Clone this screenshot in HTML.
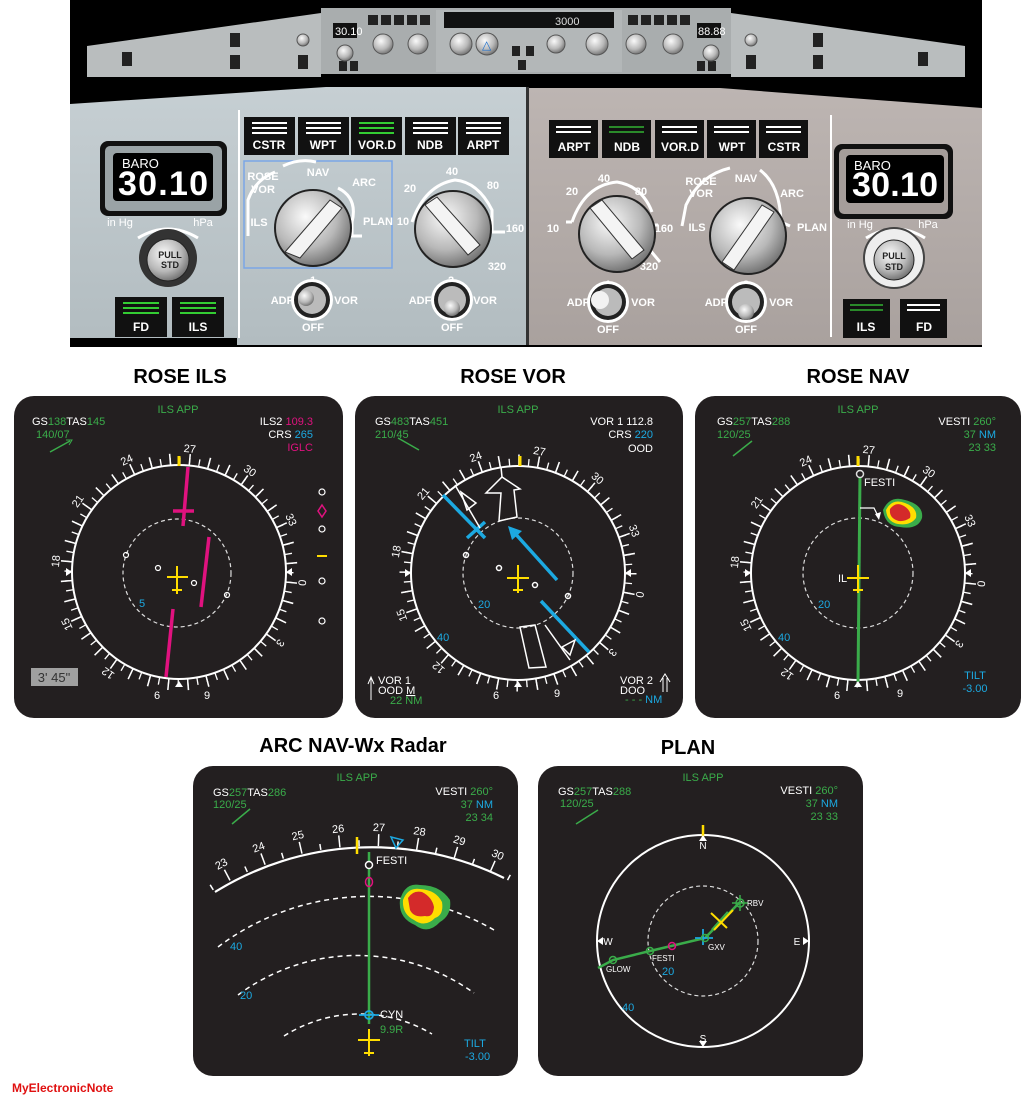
<!DOCTYPE html>
<html><head><meta charset="utf-8"><style>
html,body{margin:0;padding:0;background:#fff;}
svg{display:block}
text{font-family:"Liberation Sans",sans-serif;}
.t{font-size:11px;fill:#fff}
.g{fill:#3aac4a}.m{fill:#e0127f}.c{fill:#1ca9e1}.w{fill:#fff}
.lbl{font-size:11px;fill:#fff;text-anchor:middle}
.pl{font-size:11px;fill:#fff;font-weight:bold;text-anchor:middle}
.btn{font-size:12px;fill:#fff;font-weight:bold;text-anchor:middle}
</style></head><body>
<svg width="1036" height="1102" viewBox="0 0 1036 1102" xmlns="http://www.w3.org/2000/svg">
<defs>
<radialGradient id="kn" cx="40%" cy="35%" r="70%"><stop offset="0" stop-color="#fafafa"/><stop offset="0.6" stop-color="#b8b8b8"/><stop offset="1" stop-color="#6a6a6a"/></radialGradient>
<linearGradient id="lp" x1="0" y1="0" x2="0" y2="1"><stop offset="0" stop-color="#c6cfd3"/><stop offset="1" stop-color="#b2bcc0"/></linearGradient>
<linearGradient id="rp" x1="0" y1="0" x2="0" y2="1"><stop offset="0" stop-color="#bdb5b2"/><stop offset="1" stop-color="#a9a19e"/></linearGradient>
<clipPath id="arcclip"><rect x="195" y="768" width="321" height="306" rx="18"/></clipPath>
</defs>
<rect width="1036" height="1102" fill="#fff"/>

<!-- ===== TOP PANEL ===== -->
<rect x="70" y="0" width="912" height="347" fill="#000"/>
<polygon points="87,46 321,13 321,77 87,77" fill="#b9bdbe"/>
<polygon points="731,13 965,46 965,77 731,77" fill="#b9bdbe"/>
<rect x="321" y="8" width="410" height="66" fill="#a9adae"/>
<rect x="436" y="10" width="186" height="62" fill="#b3b7b8"/>
<rect x="444" y="12" width="170" height="16" fill="#111"/>
<text x="555" y="25" font-size="11" fill="#ddd">3000</text>
<rect x="333" y="23" width="24" height="15" fill="#111"/><text x="335" y="35" font-size="11" fill="#fff">30.10</text>
<rect x="697" y="23" width="24" height="15" fill="#111"/><text x="698" y="35" font-size="11" fill="#fff">88.88</text>
<g fill="#222"><rect x="368" y="15" width="10" height="10"/><rect x="381" y="15" width="10" height="10"/><rect x="394" y="15" width="10" height="10"/><rect x="407" y="15" width="10" height="10"/><rect x="420" y="15" width="10" height="10"/>
<rect x="628" y="15" width="10" height="10"/><rect x="641" y="15" width="10" height="10"/><rect x="654" y="15" width="10" height="10"/><rect x="667" y="15" width="10" height="10"/><rect x="680" y="15" width="10" height="10"/>
<rect x="122" y="52" width="10" height="14"/><rect x="230" y="33" width="10" height="14"/><rect x="230" y="55" width="10" height="14"/><rect x="298" y="55" width="10" height="14"/>
<rect x="813" y="33" width="10" height="14"/><rect x="813" y="55" width="10" height="14"/><rect x="918" y="52" width="10" height="14"/><rect x="746" y="55" width="10" height="14"/>
<rect x="339" y="61" width="8" height="10"/><rect x="350" y="61" width="8" height="10"/><rect x="697" y="61" width="8" height="10"/><rect x="708" y="61" width="8" height="10"/>
<rect x="512" y="46" width="8" height="10"/><rect x="526" y="46" width="8" height="10"/><rect x="518" y="60" width="8" height="10"/></g>
<g fill="url(#kn)" stroke="#555"><circle cx="345" cy="53" r="8"/><circle cx="383" cy="44" r="10"/><circle cx="418" cy="44" r="10"/><circle cx="461" cy="44" r="11"/><circle cx="487" cy="44" r="11"/><circle cx="556" cy="44" r="9"/><circle cx="597" cy="44" r="11"/><circle cx="636" cy="44" r="10"/><circle cx="673" cy="44" r="10"/><circle cx="711" cy="53" r="8"/><circle cx="303" cy="40" r="6"/><circle cx="751" cy="40" r="6"/></g>
<text x="482" y="49" font-size="12" fill="#1a6fd0">△</text>

<!-- lower panels -->
<polygon points="70,104 326,87 527,87 527,345 237,345 237,338 70,338" fill="url(#lp)"/>
<polygon points="528,88 720,88 982,108 982,345 528,345" fill="url(#rp)"/>
<rect x="526" y="87" width="3" height="258" fill="#333"/>
<rect x="238" y="110" width="2" height="228" fill="#fff"/>
<rect x="830" y="115" width="2" height="222" fill="#fff"/>

<!-- buttons left -->
<g>
<rect x="244" y="117" width="51" height="38" fill="#111"/><rect x="252" y="122" width="35" height="2" fill="#fff"/><rect x="252" y="127" width="35" height="2" fill="#fff"/><rect x="252" y="132" width="35" height="2" fill="#fff"/><text x="269" y="149" class="btn">CSTR</text>
<rect x="298" y="117" width="51" height="38" fill="#111"/><rect x="306" y="122" width="35" height="2" fill="#fff"/><rect x="306" y="127" width="35" height="2" fill="#fff"/><rect x="306" y="132" width="35" height="2" fill="#fff"/><text x="323" y="149" class="btn">WPT</text>
<rect x="351" y="117" width="51" height="38" fill="#111"/><rect x="359" y="122" width="35" height="2" fill="#3c3"/><rect x="359" y="127" width="35" height="2" fill="#3c3"/><rect x="359" y="132" width="35" height="2" fill="#3c3"/><text x="377" y="149" class="btn">VOR.D</text>
<rect x="405" y="117" width="51" height="38" fill="#111"/><rect x="413" y="122" width="35" height="2" fill="#fff"/><rect x="413" y="127" width="35" height="2" fill="#fff"/><rect x="413" y="132" width="35" height="2" fill="#fff"/><text x="430" y="149" class="btn">NDB</text>
<rect x="458" y="117" width="51" height="38" fill="#111"/><rect x="466" y="122" width="35" height="2" fill="#fff"/><rect x="466" y="127" width="35" height="2" fill="#fff"/><rect x="466" y="132" width="35" height="2" fill="#fff"/><text x="483" y="149" class="btn">ARPT</text>
</g>
<!-- buttons right -->
<g>
<rect x="549" y="120" width="49" height="38" fill="#111"/><rect x="556" y="126" width="35" height="2" fill="#fff"/><rect x="556" y="131" width="35" height="2" fill="#fff"/><text x="574" y="151" class="btn">ARPT</text>
<rect x="602" y="120" width="49" height="38" fill="#111"/><rect x="609" y="126" width="35" height="2" fill="#2a8a2a"/><rect x="609" y="131" width="35" height="2" fill="#2a8a2a"/><text x="627" y="151" class="btn">NDB</text>
<rect x="655" y="120" width="49" height="38" fill="#111"/><rect x="662" y="126" width="35" height="2" fill="#fff"/><rect x="662" y="131" width="35" height="2" fill="#fff"/><text x="680" y="151" class="btn">VOR.D</text>
<rect x="707" y="120" width="49" height="38" fill="#111"/><rect x="714" y="126" width="35" height="2" fill="#fff"/><rect x="714" y="131" width="35" height="2" fill="#fff"/><text x="732" y="151" class="btn">WPT</text>
<rect x="759" y="120" width="49" height="38" fill="#111"/><rect x="766" y="126" width="35" height="2" fill="#fff"/><rect x="766" y="131" width="35" height="2" fill="#fff"/><text x="784" y="151" class="btn">CSTR</text>
</g>

<!-- BARO -->
<rect x="100" y="141" width="127" height="75" rx="8" fill="#111"/><rect x="105" y="146" width="117" height="65" rx="5" fill="#9aa3a6"/><rect x="113" y="153" width="100" height="48" rx="4" fill="#000"/>
<text x="122" y="168" font-size="13" fill="#fff">BARO</text><text x="163" y="195" font-size="34" font-weight="bold" fill="#fff" text-anchor="middle" textLength="90">30.10</text>
<rect x="834" y="144" width="119" height="75" rx="8" fill="#111"/><rect x="839" y="149" width="109" height="65" rx="5" fill="#a59d9a"/><rect x="846" y="155" width="98" height="48" rx="4" fill="#000"/>
<text x="854" y="170" font-size="13" fill="#fff">BARO</text><text x="895" y="196" font-size="34" font-weight="bold" fill="#fff" text-anchor="middle" textLength="86">30.10</text>
<text x="120" y="226" class="lbl">in Hg</text><text x="203" y="226" class="lbl">hPa</text>
<text x="860" y="228" class="lbl">in Hg</text><text x="928" y="228" class="lbl">hPa</text>
<path d="M138,238 Q168,220 198,238" stroke="#fff" stroke-width="3" fill="none"/>
<path d="M866,238 Q896,220 925,238" stroke="#fff" stroke-width="3" fill="none"/>
<circle cx="168" cy="258" r="29" fill="#333"/><circle cx="168" cy="260" r="21" fill="url(#kn)" stroke="#222"/>
<text x="170" y="258" font-size="9" font-weight="bold" text-anchor="middle" fill="#222">PULL</text><text x="170" y="268" font-size="9" font-weight="bold" text-anchor="middle" fill="#222">STD</text>
<circle cx="894" cy="258" r="30" fill="#eee" stroke="#444" stroke-width="2"/><circle cx="894" cy="260" r="20" fill="url(#kn)" stroke="#222"/>
<text x="894" y="259" font-size="9" font-weight="bold" text-anchor="middle" fill="#222">PULL</text><text x="894" y="270" font-size="9" font-weight="bold" text-anchor="middle" fill="#222">STD</text>

<!-- FD / ILS -->
<rect x="115" y="297" width="52" height="40" fill="#111"/><rect x="123" y="302" width="36" height="2" fill="#3c3"/><rect x="123" y="307" width="36" height="2" fill="#3c3"/><rect x="123" y="312" width="36" height="2" fill="#3c3"/><text x="141" y="331" class="btn">FD</text>
<rect x="172" y="297" width="52" height="40" fill="#111"/><rect x="180" y="302" width="36" height="2" fill="#3c3"/><rect x="180" y="307" width="36" height="2" fill="#3c3"/><rect x="180" y="312" width="36" height="2" fill="#3c3"/><text x="198" y="331" class="btn">ILS</text>
<rect x="843" y="299" width="47" height="39" fill="#111"/><rect x="850" y="304" width="33" height="2" fill="#2a8a2a"/><rect x="850" y="309" width="33" height="2" fill="#2a8a2a"/><text x="866" y="331" class="btn">ILS</text>
<rect x="900" y="299" width="47" height="39" fill="#111"/><rect x="907" y="304" width="33" height="2" fill="#fff"/><rect x="907" y="309" width="33" height="2" fill="#fff"/><text x="924" y="331" class="btn">FD</text>

<!-- mode/range knobs -->
<rect x="244" y="161" width="148" height="107" fill="none" stroke="#7aa6e6" stroke-width="1.5"/>
<path d="M248,236 L248,200 Q255,180 275,172 M283,166 Q300,158 316,162 M338,188 Q358,198 352,222 L352,236 L362,236" stroke="#fff" stroke-width="3" fill="none"/>
<text x="263" y="180" class="pl">ROSE</text><text x="263" y="193" class="pl">VOR</text><text x="318" y="176" class="pl">NAV</text><text x="364" y="186" class="pl">ARC</text><text x="378" y="225" class="pl">PLAN</text><text x="259" y="226" class="pl">ILS</text>
<circle cx="313" cy="228" r="38" fill="url(#kn)" stroke="#222" stroke-width="2"/><path d="M285,252 L330,200 L342,208 L300,258 Z" fill="#f4f4f4" stroke="#333"/>
<path d="M412,222 Q425,185 455,180 Q478,182 492,210 L492,232 M492,232 L505,232" stroke="#fff" stroke-width="3" fill="none"/>
<text x="410" y="192" class="pl">20</text><text x="452" y="175" class="pl">40</text><text x="493" y="189" class="pl">80</text><text x="403" y="225" class="pl">10</text><text x="515" y="232" class="pl">160</text><text x="497" y="270" class="pl">320</text>
<circle cx="453" cy="229" r="38" fill="url(#kn)" stroke="#222" stroke-width="2"/><path d="M425,205 L437,197 L480,245 L468,255 Z" fill="#f4f4f4" stroke="#333"/>

<path d="M572,222 Q585,185 617,182 Q642,186 652,212 M566,222 L572,222 M652,225 L658,225 M650,250 L660,262" stroke="#fff" stroke-width="3" fill="none"/>
<text x="572" y="195" class="pl">20</text><text x="604" y="182" class="pl">40</text><text x="641" y="195" class="pl">80</text><text x="553" y="232" class="pl">10</text><text x="664" y="232" class="pl">160</text><text x="649" y="270" class="pl">320</text>
<circle cx="617" cy="234" r="38" fill="url(#kn)" stroke="#222" stroke-width="2"/><path d="M590,208 L602,200 L644,250 L632,259 Z" fill="#f4f4f4" stroke="#333"/>
<path d="M682,226 L686,205 Q700,175 730,168 M760,170 Q780,185 781,222 L790,226" stroke="#fff" stroke-width="3" fill="none"/>
<text x="701" y="185" class="pl">ROSE</text><text x="701" y="197" class="pl">VOR</text><text x="746" y="182" class="pl">NAV</text><text x="792" y="197" class="pl">ARC</text><text x="812" y="231" class="pl">PLAN</text><text x="697" y="231" class="pl">ILS</text>
<circle cx="748" cy="236" r="38" fill="url(#kn)" stroke="#222" stroke-width="2"/><path d="M722,262 L762,205 L774,212 L734,270 Z" fill="#f4f4f4" stroke="#333"/>

<!-- ADF/VOR switches -->
<g>
<text x="313" y="284" class="pl">1</text><text x="451" y="284" class="pl">2</text><text x="608" y="288" class="pl">1</text><text x="746" y="288" class="pl">2</text>
<text x="282" y="304" class="pl">ADF</text><text x="346" y="304" class="pl">VOR</text><text x="313" y="331" class="pl">OFF</text>
<text x="420" y="304" class="pl">ADF</text><text x="485" y="304" class="pl">VOR</text><text x="452" y="331" class="pl">OFF</text>
<text x="578" y="306" class="pl">ADF</text><text x="643" y="306" class="pl">VOR</text><text x="608" y="333" class="pl">OFF</text>
<text x="716" y="306" class="pl">ADF</text><text x="781" y="306" class="pl">VOR</text><text x="746" y="333" class="pl">OFF</text>
<circle cx="312" cy="300" r="21" fill="#fff"/><circle cx="312" cy="300" r="18" fill="#222"/><circle cx="312" cy="300" r="14" fill="#bbb"/><circle cx="306" cy="298" r="8" fill="url(#kn)"/>
<circle cx="452" cy="300" r="21" fill="#fff"/><circle cx="452" cy="300" r="18" fill="#222"/><circle cx="452" cy="300" r="14" fill="#bbb"/><circle cx="452" cy="308" r="8" fill="url(#kn)"/>
<circle cx="608" cy="302" r="21" fill="#fff"/><circle cx="608" cy="302" r="18" fill="#222"/><circle cx="608" cy="302" r="14" fill="#bbb"/><circle cx="600" cy="300" r="9" fill="#f2f2f2"/>
<circle cx="746" cy="302" r="21" fill="#fff"/><circle cx="746" cy="302" r="18" fill="#222"/><circle cx="746" cy="302" r="14" fill="#bbb"/><circle cx="746" cy="312" r="8" fill="url(#kn)"/>
</g>

<!-- ===== TITLES ===== -->
<g font-weight="bold" font-size="20" text-anchor="middle" fill="#000">
<text x="180" y="383">ROSE ILS</text><text x="513" y="383">ROSE VOR</text><text x="858" y="383">ROSE NAV</text>
<text x="353" y="752">ARC NAV-Wx Radar</text><text x="688" y="754">PLAN</text></g>
<text x="12" y="1092" font-size="12" font-weight="bold" fill="#e01010">MyElectronicNote</text>

<!-- ===== ROSE ILS ===== -->
<rect x="14" y="396" width="329" height="322" rx="20" fill="#231f20"/>
<text x="178" y="413" class="t g" text-anchor="middle">ILS APP</text>
<text x="32" y="425" class="t"><tspan class="w">GS</tspan><tspan class="g">138</tspan><tspan class="w">TAS</tspan><tspan class="g">145</tspan></text>
<text x="36" y="438" class="t g">140/07</text>
<line x1="50" y1="452" x2="70" y2="441" stroke="#3aac4a" stroke-width="1.5"/><path d="M66,440 L72,440 L69,445" fill="none" stroke="#3aac4a"/>
<text x="313" y="425" class="t" text-anchor="end">ILS2 <tspan class="m">109.3</tspan></text>
<text x="313" y="438" class="t" text-anchor="end">CRS <tspan class="c">265</tspan></text>
<text x="313" y="451" class="t m" text-anchor="end">IGLC</text>
<circle cx="179" cy="572" r="107" fill="none" stroke="#fff" stroke-width="2"/>
<circle cx="179" cy="572" r="111" fill="none" stroke="#fff" stroke-width="7" stroke-dasharray="1.3 8.39"/>
<circle cx="179" cy="572" r="113" fill="none" stroke="#fff" stroke-width="11" stroke-dasharray="1.5 18.22" stroke-dashoffset="-9.86"/>
<g class="lbl" font-size="11">
<text x="179" y="452" transform="rotate(-25 179 572)" fill="#fff" text-anchor="middle">24</text>
<text x="179" y="452" transform="rotate(5 179 572)" fill="#fff" text-anchor="middle">27</text>
<text x="179" y="452" transform="rotate(35 179 572)" fill="#fff" text-anchor="middle">30</text>
<text x="179" y="452" transform="rotate(65 179 572)" fill="#fff" text-anchor="middle">33</text>
<text x="179" y="452" transform="rotate(95 179 572)" fill="#fff" text-anchor="middle">0</text>
<text x="179" y="452" transform="rotate(125 179 572)" fill="#fff" text-anchor="middle">3</text>
<text x="179" y="699" fill="#fff" text-anchor="middle" transform="translate(-22 0)">6</text>
<text x="179" y="699" fill="#fff" text-anchor="middle" transform="translate(28 0)">9</text>
<text x="179" y="452" transform="rotate(215 179 572)" fill="#fff" text-anchor="middle">12</text>
<text x="179" y="452" transform="rotate(245 179 572)" fill="#fff" text-anchor="middle">15</text>
<text x="179" y="452" transform="rotate(275 179 572)" fill="#fff" text-anchor="middle">18</text>
<text x="179" y="452" transform="rotate(305 179 572)" fill="#fff" text-anchor="middle">21</text>
</g>
<line x1="179" y1="456" x2="179" y2="466" stroke="#ffdd00" stroke-width="3"/>
<circle cx="177" cy="573" r="54" fill="none" stroke="#ddd" stroke-width="1.2" stroke-dasharray="4 3"/>
<g stroke="#e0127f" stroke-width="3.5"><line x1="188" y1="467" x2="183" y2="526"/><line x1="173" y1="511" x2="194" y2="511"/><line x1="209" y1="537" x2="201" y2="607"/><line x1="173" y1="609" x2="166" y2="677"/></g>
<g stroke="#ffdd00" stroke-width="2"><line x1="167" y1="577" x2="188" y2="577"/><line x1="177" y1="566" x2="177" y2="594"/><line x1="172" y1="590" x2="182" y2="590"/></g>
<g fill="none" stroke="#fff" stroke-width="1.2"><circle cx="158" cy="568" r="2.5"/><circle cx="194" cy="583" r="2.5"/><circle cx="126" cy="555" r="2.5"/><circle cx="227" cy="595" r="2.5"/>
<circle cx="322" cy="492" r="3"/><circle cx="322" cy="529" r="3"/><circle cx="322" cy="581" r="3"/><circle cx="322" cy="621" r="3"/></g>
<path d="M322,505 L326,511 L322,517 L318,511 Z" fill="none" stroke="#e0127f" stroke-width="1.5"/>
<line x1="317" y1="556" x2="327" y2="556" stroke="#ffdd00" stroke-width="2"/>
<g fill="#fff"><path d="M179,681 l-4,6 h8z"/><path d="M72,572 l-6,-4 v8z"/><path d="M286,572 l6,-4 v8z"/></g>
<text x="139" y="607" class="t c" font-size="9">5</text>
<rect x="31" y="668" width="47" height="18" fill="#a0a0a0"/><text x="54" y="682" font-size="13" fill="#333" text-anchor="middle">3' 45"</text>

<!-- ===== ROSE VOR ===== -->
<rect x="355" y="396" width="328" height="322" rx="20" fill="#231f20"/>
<text x="518" y="413" class="t g" text-anchor="middle">ILS APP</text>
<text x="375" y="425" class="t"><tspan class="w">GS</tspan><tspan class="g">483</tspan><tspan class="w">TAS</tspan><tspan class="g">451</tspan></text>
<text x="375" y="438" class="t g">210/45</text>
<line x1="419" y1="450" x2="398" y2="438" stroke="#3aac4a" stroke-width="1.5"/>
<text x="653" y="425" class="t" text-anchor="end">VOR 1  112.8</text>
<text x="653" y="438" class="t" text-anchor="end">CRS <tspan class="c">220</tspan></text>
<text x="653" y="452" class="t" text-anchor="end">OOD</text>
<circle cx="518" cy="573" r="107" fill="none" stroke="#fff" stroke-width="2"/>
<circle cx="518" cy="573" r="111" fill="none" stroke="#fff" stroke-width="7" stroke-dasharray="1.3 8.39"/>
<circle cx="518" cy="573" r="113" fill="none" stroke="#fff" stroke-width="11" stroke-dasharray="1.5 18.22"/>
<g font-size="11" fill="#fff" text-anchor="middle">
<text x="518" y="453" transform="rotate(-20 518 573)">24</text><text x="518" y="453" transform="rotate(10 518 573)">27</text>
<text x="518" y="453" transform="rotate(40 518 573)">30</text><text x="518" y="453" transform="rotate(70 518 573)">33</text>
<text x="518" y="453" transform="rotate(100 518 573)">0</text><text x="518" y="453" transform="rotate(130 518 573)">3</text>
<text x="496" y="699">6</text><text x="557" y="697">9</text>
<text x="518" y="453" transform="rotate(220 518 573)">12</text><text x="518" y="453" transform="rotate(250 518 573)">15</text>
<text x="518" y="453" transform="rotate(280 518 573)">18</text><text x="518" y="453" transform="rotate(310 518 573)">21</text></g>
<line x1="520" y1="456" x2="520" y2="466" stroke="#ffdd00" stroke-width="3"/>
<circle cx="518" cy="573" r="55" fill="none" stroke="#ddd" stroke-width="1.2" stroke-dasharray="4 3"/>
<g stroke="#1ca9e1" stroke-width="3.5" fill="none"><line x1="443" y1="495" x2="485" y2="538"/><line x1="467" y1="538" x2="485" y2="522"/><line x1="557" y1="580" x2="512" y2="530"/><line x1="541" y1="601" x2="589" y2="652"/></g>
<path d="M508,526 L522,531 L512,540 Z" fill="#1ca9e1"/>
<g fill="none" stroke="#fff" stroke-width="1.5"><path d="M499,521 L501,493 L486,493 L502,477 L520,489 L514,490 L517,517 Z"/><line x1="502" y1="477" x2="501" y2="467"/>
<path d="M520,627 L535,625 L546,667 L529,668 Z"/><path d="M461,492 L476,503 L467,510 Z"/><line x1="455" y1="485" x2="480" y2="528"/><path d="M562,647 L575,640 L570,655 Z"/><line x1="545" y1="625" x2="570" y2="660"/>
<circle cx="499" cy="568" r="2.5"/><circle cx="535" cy="585" r="2.5"/><circle cx="466" cy="555" r="2.5"/><circle cx="568" cy="596" r="2.5"/></g>
<g stroke="#ffdd00" stroke-width="2"><line x1="507" y1="578" x2="529" y2="578"/><line x1="518" y1="565" x2="518" y2="593"/><line x1="513" y1="590" x2="523" y2="590"/></g>
<g fill="#fff"><path d="M518,681 l-4,6 h8z"/><path d="M411,573 l-6,-4 v8z"/><path d="M625,573 l6,-4 v8z"/></g>
<text x="478" y="608" class="t c" font-size="9">20</text><text x="437" y="641" class="t c" font-size="9">40</text>
<path d="M371,700 V678 M368,684 L371,677 L374,684" stroke="#fff" fill="none"/>
<text x="378" y="684" class="t" font-size="9">VOR 1</text><text x="378" y="694" class="t" font-size="9">OOD <tspan text-decoration="underline">M</tspan></text><text x="390" y="704" class="t g" font-size="9">22 NM</text>
<text x="620" y="684" class="t" font-size="9">VOR 2</text><text x="620" y="694" class="t" font-size="9">DOO</text><text x="625" y="703" class="t g" font-size="9">- - - <tspan class="c">NM</tspan></text>
<path d="M663,692 V678 M667,692 V678 M660,682 L665,674 L670,682" stroke="#fff" fill="none"/>

<!-- ===== ROSE NAV ===== -->
<rect x="695" y="396" width="326" height="322" rx="20" fill="#231f20"/>
<text x="858" y="413" class="t g" text-anchor="middle">ILS APP</text>
<text x="717" y="425" class="t"><tspan class="w">GS</tspan><tspan class="g">257</tspan><tspan class="w">TAS</tspan><tspan class="g">288</tspan></text>
<text x="717" y="438" class="t g">120/25</text>
<line x1="752" y1="441" x2="733" y2="456" stroke="#3aac4a" stroke-width="1.5"/>
<text x="996" y="425" class="t" text-anchor="end">VESTI  <tspan class="g">260°</tspan></text>
<text x="996" y="438" class="t g" text-anchor="end">37 <tspan class="c">NM</tspan></text>
<text x="996" y="451" class="t g" text-anchor="end">23 33</text>
<circle cx="858" cy="573" r="107" fill="none" stroke="#fff" stroke-width="2"/>
<circle cx="858" cy="573" r="111" fill="none" stroke="#fff" stroke-width="7" stroke-dasharray="1.3 8.39"/>
<circle cx="858" cy="573" r="113" fill="none" stroke="#fff" stroke-width="11" stroke-dasharray="1.5 18.22" stroke-dashoffset="-9.86"/>
<g font-size="11" fill="#fff" text-anchor="middle">
<text x="858" y="453" transform="rotate(-25 858 573)">24</text><text x="858" y="453" transform="rotate(5 858 573)">27</text>
<text x="858" y="453" transform="rotate(35 858 573)">30</text><text x="858" y="453" transform="rotate(65 858 573)">33</text>
<text x="858" y="453" transform="rotate(95 858 573)">0</text><text x="858" y="453" transform="rotate(125 858 573)">3</text>
<text x="837" y="699">6</text><text x="900" y="697">9</text>
<text x="858" y="453" transform="rotate(215 858 573)">12</text><text x="858" y="453" transform="rotate(245 858 573)">15</text>
<text x="858" y="453" transform="rotate(275 858 573)">18</text><text x="858" y="453" transform="rotate(305 858 573)">21</text></g>
<line x1="858" y1="456" x2="858" y2="466" stroke="#ffdd00" stroke-width="3"/>
<circle cx="858" cy="573" r="55" fill="none" stroke="#ddd" stroke-width="1.2" stroke-dasharray="4 3"/>
<line x1="860" y1="474" x2="858" y2="682" stroke="#3aac4a" stroke-width="3"/>
<circle cx="860" cy="474" r="3.5" fill="#231f20" stroke="#ddd" stroke-width="1.5"/>
<text x="864" y="486" class="t" font-size="8">FESTI</text>
<path d="M860,508 H874 L878,516" stroke="#fff" fill="none" stroke-width="1.2"/><path d="M875,514 L879,520 L881,512 Z" fill="#fff"/>
<path d="M883,510 Q890,495 905,500 Q924,505 922,518 Q918,530 900,527 Q885,526 883,510 Z" fill="#3aac4a"/>
<path d="M886,510 Q892,498 905,503 Q918,508 916,518 Q910,526 898,524 Q887,522 886,510 Z" fill="#ffdd00"/>
<path d="M890,509 Q896,501 904,506 Q912,511 910,518 Q902,523 896,520 Q889,517 890,509 Z" fill="#d42a2a"/>
<g stroke="#ffdd00" stroke-width="2"><line x1="847" y1="578" x2="869" y2="578"/><line x1="858" y1="565" x2="858" y2="593"/><line x1="853" y1="590" x2="863" y2="590"/></g>
<text x="838" y="582" class="t" font-size="9" fill="#ccc">IL</text>
<g fill="#fff"><path d="M858,681 l-4,6 h8z"/><path d="M751,573 l-6,-4 v8z"/><path d="M965,573 l6,-4 v8z"/></g>
<text x="818" y="608" class="t c" font-size="9">20</text><text x="778" y="641" class="t c" font-size="9">40</text>
<text x="975" y="679" class="t c" text-anchor="middle">TILT</text><text x="975" y="692" class="t c" text-anchor="middle">-3.00</text>

<!-- ===== ARC ===== -->
<rect x="193" y="766" width="325" height="310" rx="20" fill="#231f20"/>
<text x="357" y="781" class="t g" text-anchor="middle">ILS APP</text>
<text x="213" y="796" class="t"><tspan class="w">GS</tspan><tspan class="g">257</tspan><tspan class="w">TAS</tspan><tspan class="g">286</tspan></text>
<text x="213" y="808" class="t g">120/25</text>
<line x1="250" y1="809" x2="232" y2="824" stroke="#3aac4a" stroke-width="1.5"/>
<text x="493" y="795" class="t" text-anchor="end">VESTI  <tspan class="g">260°</tspan></text>
<text x="493" y="808" class="t g" text-anchor="end">37 <tspan class="c">NM</tspan></text>
<text x="493" y="821" class="t g" text-anchor="end">23 34</text>
<g clip-path="url(#arcclip)">
<path d="M215,892 A298,298 0 0 1 504,878" fill="none" stroke="#fff" stroke-width="2.2"/>
<g stroke="#fff" stroke-width="1.5">
<line x1="369" y1="846" x2="369" y2="834" transform="rotate(1.8 369 1144)"/><line x1="369" y1="846" x2="369" y2="834" transform="rotate(-5.6 369 1144)"/><line x1="369" y1="846" x2="369" y2="834" transform="rotate(-13 369 1144)"/><line x1="369" y1="846" x2="369" y2="834" transform="rotate(-20.4 369 1144)"/><line x1="369" y1="846" x2="369" y2="834" transform="rotate(-27.8 369 1144)"/><line x1="369" y1="846" x2="369" y2="834" transform="rotate(9.2 369 1144)"/><line x1="369" y1="846" x2="369" y2="834" transform="rotate(16.6 369 1144)"/><line x1="369" y1="846" x2="369" y2="834" transform="rotate(24 369 1144)"/>
<line x1="369" y1="846" x2="369" y2="840" transform="rotate(-1.9 369 1144)"/><line x1="369" y1="846" x2="369" y2="840" transform="rotate(-9.3 369 1144)"/><line x1="369" y1="846" x2="369" y2="840" transform="rotate(-16.7 369 1144)"/><line x1="369" y1="846" x2="369" y2="840" transform="rotate(-24.1 369 1144)"/><line x1="369" y1="846" x2="369" y2="840" transform="rotate(-31.5 369 1144)"/><line x1="369" y1="846" x2="369" y2="840" transform="rotate(5.5 369 1144)"/><line x1="369" y1="846" x2="369" y2="840" transform="rotate(12.9 369 1144)"/><line x1="369" y1="846" x2="369" y2="840" transform="rotate(20.3 369 1144)"/><line x1="369" y1="846" x2="369" y2="840" transform="rotate(27.7 369 1144)"/>
</g>
<g font-size="11" fill="#fff" text-anchor="middle">
<text x="369" y="831" transform="rotate(1.8 369 1144)">27</text><text x="369" y="831" transform="rotate(-5.6 369 1144)">26</text><text x="369" y="831" transform="rotate(-13 369 1144)">25</text><text x="369" y="831" transform="rotate(-20.4 369 1144)">24</text><text x="369" y="831" transform="rotate(-27.8 369 1144)">23</text><text x="369" y="831" transform="rotate(9.2 369 1144)">28</text><text x="369" y="831" transform="rotate(16.6 369 1144)">29</text><text x="369" y="831" transform="rotate(24 369 1144)">30</text></g>
</g>
<line x1="357" y1="837" x2="357" y2="854" stroke="#ffdd00" stroke-width="2.5"/>
<path d="M391,837 L403,840 L396,848 Z" fill="none" stroke="#1ca9e1" stroke-width="1.5"/>
<g fill="none" stroke="#fff" stroke-width="1.5" stroke-dasharray="5 4">
<path d="M218,947 A250,250 0 0 1 494,930"/><path d="M238,995 A200,200 0 0 1 474,993"/><path d="M284,1036 A141,141 0 0 1 432,1034"/></g>
<line x1="369" y1="852" x2="369" y2="1024" stroke="#3aac4a" stroke-width="2.5"/>
<circle cx="369" cy="865" r="3.5" fill="#231f20" stroke="#fff" stroke-width="1.5"/>
<text x="376" y="864" class="t" font-size="9">FESTI</text>
<ellipse cx="369" cy="882" rx="3.5" ry="4.5" fill="none" stroke="#e0127f" stroke-width="1.5"/>
<path d="M400,900 Q405,882 420,885 Q440,885 450,900 Q452,915 440,922 Q428,935 415,925 Q398,918 400,900 Z" fill="#3aac4a"/>
<path d="M403,900 Q408,887 420,889 Q436,890 442,902 Q444,915 435,918 Q425,928 414,920 Q402,914 403,900 Z" fill="#ffdd00"/>
<path d="M408,898 Q413,890 422,892 Q432,897 434,907 Q433,918 425,916 Q414,918 410,910 Z" fill="#d42a2a"/>
<circle cx="369" cy="1015" r="4" fill="none" stroke="#1ca9e1" stroke-width="1.8"/><line x1="359" y1="1015" x2="379" y2="1015" stroke="#1ca9e1" stroke-width="1.8"/>
<text x="380" y="1018" class="t" font-size="9">CYN</text><text x="380" y="1033" class="t g" font-size="9">9.9R</text>
<g stroke="#ffdd00" stroke-width="2"><line x1="358" y1="1040" x2="380" y2="1040"/><line x1="369" y1="1029" x2="369" y2="1056"/><line x1="364" y1="1053" x2="374" y2="1053"/></g>
<text x="230" y="950" class="t c" font-size="9">40</text><text x="240" y="999" class="t c" font-size="9">20</text>
<text x="464" y="1047" class="t c">TILT</text><text x="465" y="1060" class="t c">-3.00</text>

<!-- ===== PLAN ===== -->
<rect x="538" y="766" width="325" height="310" rx="20" fill="#231f20"/>
<text x="703" y="781" class="t g" text-anchor="middle">ILS APP</text>
<text x="558" y="795" class="t"><tspan class="w">GS</tspan><tspan class="g">257</tspan><tspan class="w">TAS</tspan><tspan class="g">288</tspan></text>
<text x="560" y="807" class="t g">120/25</text>
<line x1="576" y1="824" x2="598" y2="810" stroke="#3aac4a" stroke-width="1.5"/>
<text x="838" y="794" class="t" text-anchor="end">VESTI  <tspan class="g">260°</tspan></text>
<text x="838" y="807" class="t g" text-anchor="end">37 <tspan class="c">NM</tspan></text>
<text x="838" y="820" class="t g" text-anchor="end">23 33</text>
<circle cx="703" cy="941" r="106" fill="none" stroke="#fff" stroke-width="2"/>
<circle cx="703" cy="941" r="55" fill="none" stroke="#ddd" stroke-width="1.2" stroke-dasharray="4 3"/>
<line x1="703" y1="825" x2="703" y2="838" stroke="#ffdd00" stroke-width="2.5"/>
<g fill="#fff"><path d="M703,835 l-4,6 h8z"/><path d="M703,1047 l-4,-6 h8z"/><path d="M597,941 l6,-4 v8z"/><path d="M809,941 l-6,-4 v8z"/></g>
<g font-size="10" fill="#fff" text-anchor="middle"><text x="703" y="849">N</text><text x="703" y="1042">S</text><text x="608" y="945">W</text><text x="797" y="945">E</text></g>
<polyline points="598,968 613,960 650,951 705,938 740,902" fill="none" stroke="#3aac4a" stroke-width="2.5"/>
<line x1="712" y1="930" x2="728" y2="912" stroke="#3aac4a" stroke-width="2.5"/>
<g fill="none" stroke="#3aac4a" stroke-width="1.5"><circle cx="613" cy="960" r="3.5"/><circle cx="650" cy="951" r="3.5"/><circle cx="740" cy="903" r="4"/><line x1="732" y1="903" x2="748" y2="903"/><line x1="740" y1="895" x2="740" y2="911"/></g>
<circle cx="672" cy="946" r="3.5" fill="none" stroke="#e0127f" stroke-width="1.5"/>
<g stroke="#1ca9e1" stroke-width="1.8"><line x1="695" y1="938" x2="713" y2="938"/><line x1="703" y1="929" x2="703" y2="945"/></g>
<circle cx="705" cy="938" r="3.5" fill="none" stroke="#3aac4a" stroke-width="1.5"/>
<g stroke="#ffdd00" stroke-width="2"><line x1="711" y1="913" x2="727" y2="928"/><line x1="714" y1="930" x2="733" y2="910"/></g>
<g font-size="8" fill="#fff"><text x="606" y="972">GLOW</text><text x="652" y="961">FESTI</text><text x="708" y="950">GXV</text><text x="747" y="906">RBV</text></g>
<text x="662" y="975" class="t c" font-size="9">20</text><text x="622" y="1011" class="t c" font-size="9">40</text>
</svg>
</body></html>
